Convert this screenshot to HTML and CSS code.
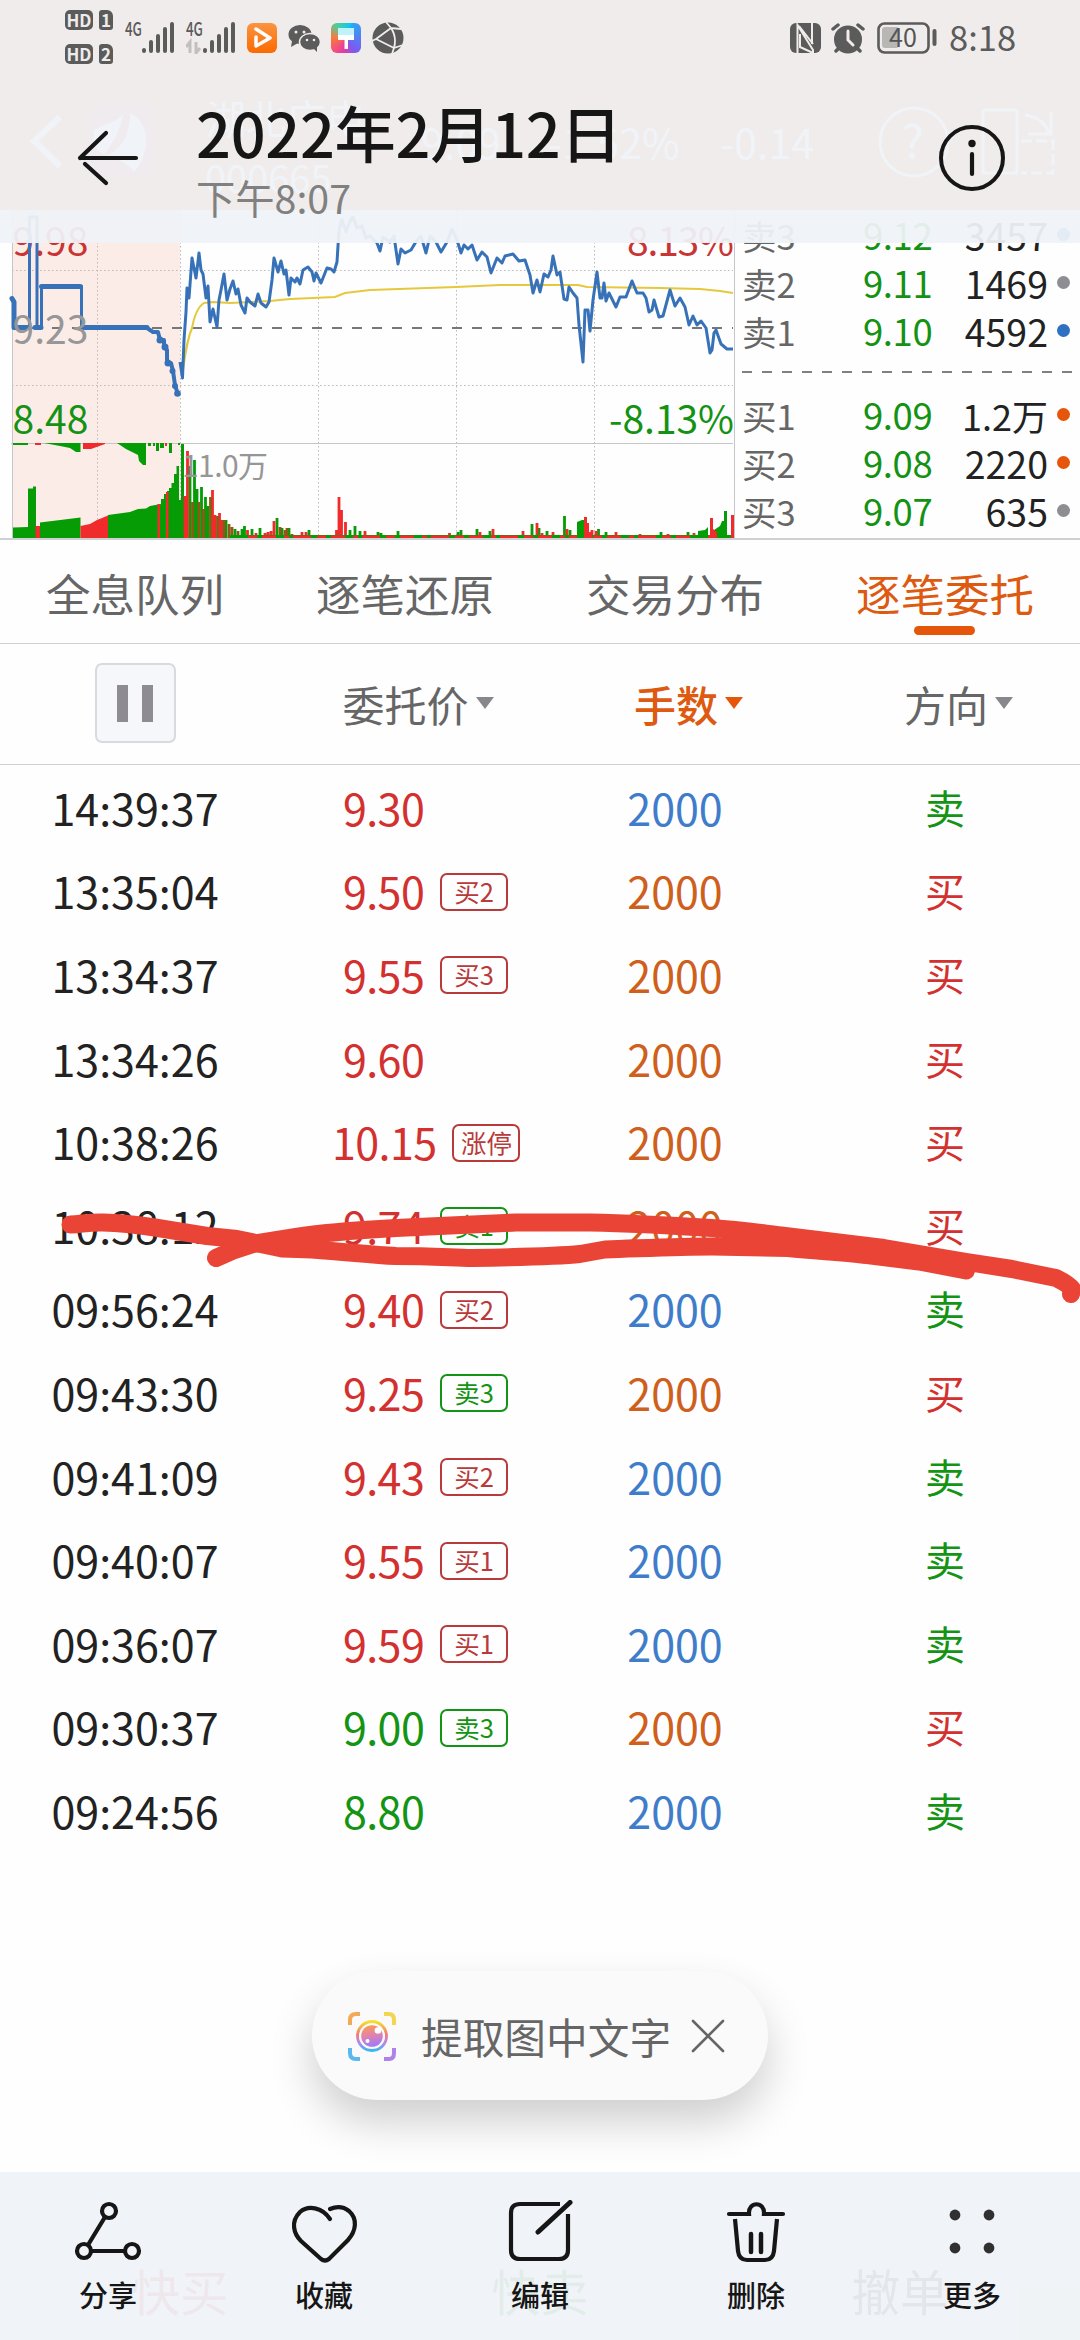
FILE: index.html
```html
<!DOCTYPE html>
<html lang="zh-CN">
<head>
<meta charset="utf-8">
<title>2022年2月12日</title>
<link rel="stylesheet" href="styles.css">
</head>
<body>
<div class="screen">
  <main class="photo">
    <svg class="stock-head" viewBox="0 0 1080 210" fill="none" stroke="#fff" stroke-width="4">
      <path d="M60 117L34 141L60 166" stroke-width="6"/>
      <rect x="88" y="106" width="66" height="70" rx="8" fill="#ff7060" stroke="none"/>
      <path d="M94 130C104 124 118 122 124 113C120 130 112 146 104 154C94 150 92 140 94 130ZM130 113C150 122 152 152 134 172C128 164 116 158 106 156C124 148 130 132 130 113Z" fill="#fff" stroke="none"/>
      <g fill="#fff" stroke="none">
        <text x="206" y="134" font-size="40">湖北广电</text>
        <text x="205" y="193" font-size="38">000665</text>
        <text x="421" y="159" font-size="41">9.09</text>
        <text x="548" y="159" font-size="41">-1.52%</text>
        <text x="720" y="159" font-size="41">-0.14</text>
        <text x="902" y="158" font-size="46">?</text>
      </g>
      <circle cx="914" cy="142" r="34" stroke-width="3"/>
      <rect x="983" y="110" width="34" height="63" rx="2" stroke-width="3"/>
      <path d="M1025 115Q1045 118 1049 134M1051 112V134H1028" stroke-width="3"/>
      <path d="M1021 141H1053V173H1021" stroke-width="3" stroke-dasharray="11 4"/>
    </svg>
    <section class="market">
      <svg class="chart" viewBox="0 210 735 328" fill="none">
        <rect x="12" y="210" width="168" height="329" fill="#fcece8"/>
        <g stroke="#b9b9b9" stroke-dasharray="1.5 2.5">
          <path d="M97.5 210V538M180.5 210V538M318.5 210V538M456.5 210V538M594.5 210V538M12 270.500H733M12 385.500H733"/>
        </g>
        <path d="M12.500 210V538M11 443.500H733M734.500 210V538" stroke="#c6c6c9"/>
        <path d="M12 328H733" stroke="#777" stroke-width="2" stroke-dasharray="10 10"/>
        <!-- order imbalance hanging under the price pane -->
        <path fill="#059c05" d="M13 443H28V445H13ZM44 443L60 446 70 448 76 452H80.500V443ZM117 443L126 449 134 453 138 455 139 461 143 465H146V443ZM148 443h3v3h-3zM153 443h2v3h-2zM156 443h3v8h-3zM160 443h4v5h-4zM169 443h3v10h-3zM178 443h2v2h-2z"/>
        <path fill="#f02b2b" d="M35 443h6v2h-6zM83 443V449H91L105 444V443ZM165 443h2v3h-2z"/>
        <!-- volume -->
        <path fill="#059c05" d="M13 539V527.500L28 527V488.500H33V486.500H36V539ZM40 539V522.500L80.500 517.500V539ZM108 539V515L130 512 138 509 146 508.500 150 506 161 504V499H164V494H167V491H169V488H171.500V483H174V474H176.500V466H179V500H181V444H184V539Z"/>
        <path fill="#f02b2b" d="M35.500 526H40V539H35.500ZM80.500 526L90 524 97 520 102 518 108 515.500V539H80.500ZM157.500 504h2.500V539h-2.500zM166 492h2.500V539h-2.500z"/>
        <path stroke="#059c05" stroke-width="2.800" d="M190 539V466M194.500 539V460M197 539V489M201.500 539V487M205.500 539V497M208 539V506M226 539V520M235 539V529M242 539V529M244.500 539V526M252 539V529M260 539V528M277 539V518M282 539V528M289 539V528M309 539V530M350 539V530M355 539V526M360 539V531M378 539V532M381 539V533M398 539V531M458 539V532M461 539V530M477 539V529M490 539V531M532 539V524M539 539V528M547 539V531M564.500 539V516M570 539V530M598.500 539V529M606 539V532M661 539V532M688 539V532"/>
        <path stroke="#f02b2b" stroke-width="2.800" d="M185 539V496M187.500 539V451M212.500 539V490M215 539V515M219.500 539V513M222 539V520M247.500 539V530M256 539V533M265 539V533M268 539V532M271 539V531M274 539V521M302 539V532M306 539V532M336.500 539V530M339 539V497M341.500 539V510M345.500 539V522M365 539V531M449.500 539V533M480 539V532M493 539V529M523 539V531M537 539V523M542 539V533M553 539V532M567 539V529M592 539V530M596 539V531M616 539V532M640 539V534M668 539V534M694 539V533"/>
        <path stroke="#8d5917" stroke-width="2.800" d="M192.500 539V502M199 539V502M203.500 539V509M210.500 539V497M217.500 539V516M224 539V520M229 539V524M232 539V527M238 539V531M280 539V527M285 539V530M287 539V528M292 539V534"/>
        <path d="M230 537H733" stroke="#059c05" stroke-width="4"/>
        <path d="M248 537.500H733" stroke="#f02b2b" stroke-width="4" stroke-dasharray="9 5 14 8 5 4 18 6"/>
        <path fill="#059c05" d="M577 539V522L582 520H584V539ZM698 539V531L705 530 708 527V539ZM714 539V530L720 526 722 521 724 521V511H727V539Z"/>
        <path fill="#f02b2b" d="M584 539V517H587V523H589V532H592V539ZM710 539V518H713V529L717 532V539ZM731 515H734V539H731Z"/>
        <g class="axis">
          <text x="12.500" y="256" fill="#c93434">9.98</text>
          <text x="12.500" y="433.500" fill="#149214">8.48</text>
          <text x="734" y="256" fill="#c93434" text-anchor="end" textLength="107">8.13%</text>
          <text x="734" y="433.500" fill="#149214" text-anchor="end" textLength="125">-8.13%</text>
          <text class="axis-small" x="182" y="477" fill="#969696" textLength="86">11.0万</text>
        </g>
        <path d="M183 370C186 350 187 340 192 328 195 312 199 306 204 303L213 302 230 303 270 301 290 299 335 297 345 293 370 290 456 287 500 285 578 285 587 287 660 288 700 289 720 291 733 293" stroke="#e6c83c" stroke-width="2"/>
        <g stroke="#3772b8" stroke-linejoin="round">
          <path stroke-width="3" d="M180 362L182.500 378 184 340 186 312 187 288 189 298 192 258 196 278 199 253 201 270 203 274 206 298 208 286 210 322 213 309 217 327 219 300 221 290 224 274 227 300 230 289 233 281 236 294 238 289 241 305 245 313 247 298 250 302 255 306 258 294 261 303 266 307 269 302 272 280 274 258 278 272 281 261 284 274 286 270 289 295 291 278 295 282 297 278 300 284 303 270 308 267 312 272 314 281 316 273 321 283 327 268 331 269 334 272 337 262 339 230 342 220 346 232 350 221 353 217 357 228 362 226 366 238 370 236 374 240 377 243 380 251 383 237 390 242 394 236 398 264 401 249 405 253 411 250 417 240 421 236 426 253 430 236 436 242 441 252 447 242 452 229 457 240 461 253 464 245 468 249 472 245 477 260 482 252 487 257 491 273 497 258 502 263 505 256 513 254 519 261 525 260 530 275 533 293 537 280 540 292 544 274 548 277 551 270 553 256 557 275 560 272 564 299 567 300 569 287 573 293 577 298 579 325 583 362 585 310 588 310 590 331 593 300 597 272 600 298 602 298 604 283 606 301 609 293 616 307 620 297 626 297 632 281 637 293 643 293 646 298 649 312 652 310 654 300 659 317 663 316 670 290 675 306 680 298 685 307 689 325 693 316 697 325 701 321 706 328 710 353 712 350 714 333 716 330 721 344 727 349 733 349"/>
          <path stroke-width="3" d="M29.500 327V217H37V327M41.500 327V286H81.500V327"/>
          <path stroke-width="5" stroke-linecap="round" d="M12 298.500L14 302V327.500H28M35 327.500H41M41.500 286.500H80M83 327.500H147"/>
          <path stroke-width="4" stroke-linecap="round" d="M147 328L153 332H158L160 340H164V347L167 350V363H171L173 371 175 385 177.500 393"/>
        </g>
        <g fill="#3772b8"><circle cx="160" cy="340" r="3.500"/><circle cx="165" cy="347" r="3.500"/><circle cx="168" cy="363" r="3.500"/><circle cx="172.500" cy="371" r="3"/><circle cx="175" cy="386" r="3"/><circle cx="177.500" cy="393.500" r="3.300"/></g>
        <text class="axis" x="12.500" y="344" fill="#979797">9.23</text>
      </svg>
      <div class="book">
        <div class="quote"><span>卖3</span><b>9.12</b><i>3457</i><em class="dot blue-dot"></em></div>
        <div class="quote"><span>卖2</span><b>9.11</b><i>1469</i><em class="dot"></em></div>
        <div class="quote"><span>卖1</span><b>9.10</b><i>4592</i><em class="dot blue-dot"></em></div>
        <div class="split"></div>
        <div class="quote"><span>买1</span><b>9.09</b><i class="wan">1.2万</i><em class="dot hot-dot"></em></div>
        <div class="quote"><span>买2</span><b>9.08</b><i>2220</i><em class="dot hot-dot"></em></div>
        <div class="quote"><span>买3</span><b>9.07</b><i>635</i><em class="dot"></em></div>
      </div>
    </section>
    <nav class="tabs">
      <div>全息队列</div><div>逐笔还原</div><div>交易分布</div><div class="active">逐笔委托</div>
    </nav>
    <div class="heads">
      <div class="pause"><span></span><span></span></div>
      <div class="head price-head">委托价<u></u></div>
      <div class="head hot">手数<u></u></div>
      <div class="head dir-head">方向<u></u></div>
    </div>
    <section class="orders">
      <div class="row"><time>14:39:37</time><div class="price red">9.30</div><div class="blue">2000</div><div class="side green">卖</div></div>
      <div class="row"><time>13:35:04</time><div class="price red">9.50<span class="tag">买2</span></div><div class="orange">2000</div><div class="side red">买</div></div>
      <div class="row"><time>13:34:37</time><div class="price red">9.55<span class="tag">买3</span></div><div class="orange">2000</div><div class="side red">买</div></div>
      <div class="row"><time>13:34:26</time><div class="price red">9.60</div><div class="orange">2000</div><div class="side red">买</div></div>
      <div class="row"><time>10:38:26</time><div class="price wide red">10.15<span class="tag">涨停</span></div><div class="orange">2000</div><div class="side red">买</div></div>
      <div class="row"><time>10:38:12</time><div class="price red">9.74<span class="tag green">卖1</span></div><div class="orange">2000</div><div class="side red">买</div></div>
      <div class="row"><time>09:56:24</time><div class="price red">9.40<span class="tag">买2</span></div><div class="blue">2000</div><div class="side green">卖</div></div>
      <div class="row"><time>09:43:30</time><div class="price red">9.25<span class="tag green">卖3</span></div><div class="orange">2000</div><div class="side red">买</div></div>
      <div class="row"><time>09:41:09</time><div class="price red">9.43<span class="tag">买2</span></div><div class="blue">2000</div><div class="side green">卖</div></div>
      <div class="row"><time>09:40:07</time><div class="price red">9.55<span class="tag">买1</span></div><div class="blue">2000</div><div class="side green">卖</div></div>
      <div class="row"><time>09:36:07</time><div class="price red">9.59<span class="tag">买1</span></div><div class="blue">2000</div><div class="side green">卖</div></div>
      <div class="row"><time>09:30:37</time><div class="price green">9.00<span class="tag">卖3</span></div><div class="orange">2000</div><div class="side red">买</div></div>
      <div class="row"><time>09:24:56</time><div class="price green">8.80</div><div class="blue">2000</div><div class="side green">卖</div></div>
    </section>
    <div class="trade"><span class="red">快买</span><span class="green">快卖</span><span>撤单</span></div>
  </main>

  <svg class="scribble" viewBox="0 1200 1080 110" fill="none" stroke="#e94436" stroke-width="18" stroke-linecap="round" stroke-linejoin="round">
    <path d="M70.500 1224.500C82 1224 90 1222 103 1222.500 120 1223 138 1225 155 1227.500L207 1236 237 1239 282 1248.500 312 1249.500C350 1252 370 1255 396 1256 430 1256 450 1257.500 472 1258 500 1257.500 560 1256 580 1254L605 1249.500C650 1248 680 1246.500 712 1246.500L788 1248C820 1251 845 1252.500 867 1255L919 1261.500 966 1270.500"/>
    <path d="M216 1258Q235 1249 255 1243.500L296 1237C320 1233 360 1230 396 1228L516 1222.500 590 1222.500C640 1223.500 680 1226 712 1228 740 1230 760 1233 781 1235.500L884 1248 967 1262 1012 1269 1056 1278C1064 1282 1070 1286 1072 1289L1071 1294"/>
  </svg>

  <div class="extract">
    <svg width="50" height="50" viewBox="0 0 50 50" fill="none">
      <defs>
        <linearGradient id="ring" x1="0" y1="0" x2="0" y2="1"><stop offset="0" stop-color="#f5e02c"/><stop offset=".45" stop-color="#f27878"/><stop offset=".75" stop-color="#b388ee"/><stop offset="1" stop-color="#39b7f0"/></linearGradient>
        <linearGradient id="lens" x1="0" y1="0" x2=".2" y2="1"><stop offset="0" stop-color="#f9a13c"/><stop offset=".5" stop-color="#e683a8"/><stop offset="1" stop-color="#a47bf5"/></linearGradient>
      </defs>
      <g stroke-width="4"><path d="M3 14V9Q3 3 9 3H13" stroke="#f4a957"/><path d="M37 3H42Q47 3 47 9V14" stroke="#f3d550"/><path d="M3 37V42Q3 48 9 48H13" stroke="#5bb7ee"/><path d="M37 48H42Q47 48 47 42V37" stroke="#ad83ea"/></g>
      <circle cx="25" cy="25" r="14.500" stroke="url(#ring)" stroke-width="2.800"/>
      <circle cx="25" cy="25" r="10.800" fill="url(#lens)"/>
      <circle cx="31" cy="19.500" r="3.300" fill="#fff"/><circle cx="20.500" cy="30" r="2" fill="#fff"/>
    </svg>
    <span>提取图中文字</span>
    <svg width="34" height="34" viewBox="0 0 34 34" stroke="#666" stroke-width="2.600" stroke-linecap="round"><path d="M2 2L32 32M32 2L2 32"/></svg>
  </div>

  <header class="overlay">
    <div class="status">
      <div class="sims">
        <div><span class="hd">HD</span><span class="sim">1</span></div>
        <div><span class="hd">HD</span><span class="sim">2</span></div>
      </div>
      <svg class="signal" width="52" height="34" viewBox="0 0 52 34"><text x="0" y="16" font-size="19" font-weight="500" textLength="17" lengthAdjust="spacingAndGlyphs" fill="#5b5b5b">4G</text><path d="M19 31V30M26 31V22M33 31V16M40 31V9M47 31V4" stroke="#5b5b5b" stroke-width="4" stroke-linecap="round"/></svg>
      <svg class="signal two" width="52" height="34" viewBox="0 0 52 34"><text x="0" y="16" font-size="19" font-weight="500" textLength="17" lengthAdjust="spacingAndGlyphs" fill="#5b5b5b">4G</text><path d="M4 33V22L0 27M10 22V33L14 28" stroke="#c2bfbf" stroke-width="3" fill="none"/><path d="M19 31V30M26 31V22M33 31V16M40 31V9M47 31V4" stroke="#5b5b5b" stroke-width="4" stroke-linecap="round"/></svg>
      <svg class="app" width="30" height="30" viewBox="0 0 30 30"><defs><linearGradient id="or" x1="0" y1="0" x2="0" y2="1"><stop stop-color="#fb9440"/><stop offset="1" stop-color="#fb6a00"/></linearGradient></defs><rect width="30" height="30" rx="6" fill="url(#or)"/><path d="M9 6L23 15 9 23V14" fill="none" stroke="#fff" stroke-width="3.500" stroke-linejoin="round" stroke-linecap="round"/></svg>
      <svg width="32" height="30" viewBox="0 0 32 30"><g fill="#5b5b5b"><ellipse cx="12" cy="11.500" rx="11.500" ry="9.500"/><path d="M4 18L3 24 10 20Z"/><ellipse cx="22" cy="19" rx="10.500" ry="8.500" stroke="#f0eceb" stroke-width="1.500"/><path d="M25 25L29 29 29 23Z"/></g><g fill="#f0eceb"><circle cx="8" cy="9" r="1.500"/><circle cx="16" cy="9" r="1.500"/><circle cx="19" cy="17" r="1.300"/><circle cx="26" cy="17" r="1.300"/></g></svg>
      <span class="theme"><svg width="30" height="30" viewBox="0 0 30 30"><path d="M7 5H23V13H7Z" fill="#bff2fb"/><path d="M7 12H23V17H17V26H13.500V17H7Z" fill="#fff"/></svg></span>
      <svg class="globe" width="32" height="32" viewBox="0 0 32 32"><circle cx="16" cy="16" r="15.500" fill="#5b5b5b"/><path d="M19 6L4 17M4 17L22 26M19 6Q25 15 22 26M19 6L14 0M19 6L29 7M4 17L0 19M22 26L31 23M22 26L20 32" fill="none" stroke="#f0eceb" stroke-width="1.800"/></svg>
      <div class="fill"></div>
      <svg width="31" height="30" viewBox="0 0 31 30"><rect width="31" height="30" rx="6" fill="#5b5b5b"/><path d="M7.500 30V2L23 27V30M9 3L23 21M22 0V21M10 11V24L23 30" fill="none" stroke="#f0eceb" stroke-width="2"/></svg>
      <svg class="alarm" width="34" height="31" viewBox="0 0 34 31"><circle cx="17" cy="16.500" r="14" fill="#5b5b5b"/><path d="M2 6L7 2M32 6L27 2M5 28L8 25M29 28L26 25" stroke="#5b5b5b" stroke-width="3.500" stroke-linecap="round"/><path d="M17 8V17L22 22" fill="none" stroke="#f0eceb" stroke-width="3" stroke-linecap="round"/></svg>
      <svg class="battery" width="61" height="32" viewBox="0 0 61 32"><rect x="1.500" y="1.500" width="50" height="29" rx="6" fill="none" stroke="#5b5b5b" stroke-width="2.600"/><rect x="5" y="5" width="17" height="21" rx="3" fill="#b9b7b6"/><path d="M57.500 9V22" stroke="#5b5b5b" stroke-width="4" stroke-linecap="round"/><text x="12" y="25" font-size="25" fill="#555">40</text></svg>
      <span class="clock">8:18</span>
    </div>
    <div class="title-bar">
      <svg class="back" width="62" height="58" viewBox="0 0 62 58" fill="none" stroke="#161616" stroke-width="4.200" stroke-linecap="round"><path d="M3 29H59M3 29L29 4M8 35L29 54"/></svg>
      <div class="titles"><h1>2022年2月12日</h1><p>下午8:07</p></div>
      <svg class="info" width="66" height="66" viewBox="0 0 66 66"><circle cx="33" cy="33" r="31" fill="none" stroke="#161616" stroke-width="4"/><circle cx="33" cy="18.500" r="3.700" fill="#161616"/><path d="M33 29V49" stroke="#161616" stroke-width="4.200" stroke-linecap="round"/></svg>
    </div>
  </header>

  <footer class="actions">
    <div><svg viewBox="0 0 68 66" fill="none" stroke="#161616" stroke-width="4.200"><circle cx="35" cy="11" r="7"/><circle cx="10" cy="51" r="7"/><circle cx="58" cy="51" r="7"/><path d="M31 17L14 45M17 51H51"/></svg>分享</div>
    <div><svg viewBox="0 0 68 66" fill="none" stroke="#161616" stroke-width="4.200" stroke-linecap="round"><path d="M40 19C32 7 18 5 10 12C0 22 4 34 11 41L31 59Q35 62 39 59L58 40C66 31 68 19 59 11C54 7 47 6 40 9"/></svg>收藏</div>
    <div><svg viewBox="0 0 68 66" fill="none" stroke="#161616" stroke-width="4.200" stroke-linecap="round"><path d="M54 4H14Q5 4 5 13V50Q5 59 14 59H53Q62 59 62 50V14" stroke-linecap="butt"/><path d="M32 32L64 2.500" stroke-width="5"/></svg>编辑</div>
    <div><svg viewBox="0 0 68 66" fill="none" stroke="#161616" stroke-width="4.200" stroke-linecap="round"><path d="M7 14H27C26 1 43 1 42 14H61"/><path d="M13 19L16 51Q17 60 25 60H43Q51 60 52 51L55 19" stroke-linecap="butt"/><path d="M29 34V52M39 34V52" stroke-width="4.500"/></svg>删除</div>
    <div><svg viewBox="0 0 68 66" fill="#303030"><circle cx="17" cy="15" r="5.400"/><circle cx="51" cy="15" r="5.400"/><circle cx="17" cy="48" r="5.400"/><circle cx="51" cy="48" r="5.400"/></svg>更多</div>
  </footer>
</div>
</body>
</html>
```

FILE: styles.css
```css
* { box-sizing: border-box; }
body { margin: 0; font-family: "Noto Sans CJK SC", sans-serif; color: #222; background: #fefefe; }
svg { display: block; flex: none; }
.screen { position: relative; width: 1080px; height: 2340px; overflow: hidden; background: #fefefe; }
.photo { display: flex; flex-direction: column; height: 2340px; }

.red { color: #d33030; }
.green { color: #149414; }
.blue { color: #3f7dca; }
.orange { color: #cf5f1c; }

/* stock page */
.stock-head { width: 1080px; height: 210px; background: #f08737; }
.market { display: flex; height: 330px; border-bottom: 2px solid #cfd0d3; }
.chart { width: 735px; height: 328px; }
.axis { font-size: 39px; }
.axis-small { font-size: 30px; }
.book { flex: 1; padding: 1px 8px 0 7px; }
.quote { display: grid; grid-template-columns: 121px 95px 90px 24px; align-items: center; height: 48px; font-size: 36.500px; line-height: 48px; white-space: nowrap; }
.quote span { font-size: 34.500px; color: #666; }
.quote b { font-weight: 400; color: #149214; letter-spacing: -.4px; }
.quote i { font-style: normal; justify-self: end; font-size: 37.500px; }
.quote .wan { font-size: 36px; }
.dot { width: 13px; height: 13px; margin-left: 6px; margin-top: -2px; border-radius: 50%; background: #8e8d92; justify-self: center; }
.blue-dot { background: #2e70c2; }
.hot-dot { background: #e5550a; }
.split { height: 36px; background: repeating-linear-gradient(90deg, #808080 0 10px, transparent 10px 20px) 0 16px / 100% 2px no-repeat; }

.tabs { display: grid; grid-template-columns: repeat(4, 1fr); height: 104px; border-bottom: 1px solid #cfd0d3; font-size: 44.500px; line-height: 105px; text-align: center; color: #666; }
.active { position: relative; color: #dd5a10; }
.active::after { content: ""; position: absolute; left: 104px; top: 86px; width: 61px; height: 9px; border-radius: 5px; background: #e5550a; }
.heads { display: grid; grid-template-columns: repeat(4, 270px); align-items: center; height: 121px; border-bottom: 1px solid #cfd0d3; color: #666; }
.head { display: flex; align-items: center; justify-content: center; gap: 7px; font-size: 42px; line-height: 60px; padding-bottom: 1px; }
.price-head { padding-left: 26px; }
.hot { color: #dd5a10; font-weight: 500; padding-left: 27px; }
.dir-head { padding-left: 27px; }
.head u { border: 9px solid transparent; border-top: 12px solid #88888c; border-bottom: 0; margin-top: -2px; }
.hot u { border-top-color: #e5550a; }
.pause { display: flex; gap: 14px; align-items: center; justify-content: center; justify-self: center; width: 81px; height: 80px; margin-top: -2px; border: 2px solid #d7dade; border-radius: 7px; background: #f5f7fb; }
.pause span { width: 11px; height: 37px; background: #8e8c92; }

.orders { padding-top: 0; }
.row { display: grid; grid-template-columns: repeat(4, 270px); align-items: center; height: 83.600px; font-size: 43px; line-height: 60px; text-align: center; }
.price { display: flex; align-items: center; padding-left: 73px; letter-spacing: -.6px; }
.wide { padding-left: 62px; }
.side { font-size: 40px; }
.tag { width: 68px; height: 38px; margin: 3px 0 0 16px; border: 2px solid currentColor; border-radius: 7px; font-size: 25.500px; line-height: 32px; letter-spacing: 0; text-align: center; }
.red > .tag:not(.green) { color: #b93a3a; }
.trade { display: grid; grid-template-columns: 360px 360px 360px; flex: 1; align-items: end; text-align: center; font-size: 48.500px; line-height: 60px; padding-bottom: 20px; }

.scribble { position: absolute; left: 0; top: 1200px; width: 1080px; height: 110px; }

/* viewer chrome */
.extract { position: absolute; left: 312px; top: 1971px; width: 456px; height: 129px; border-radius: 65px; display: flex; align-items: center; padding: 0 43px 0 35px; background: #fafafb; box-shadow: 0 22px 44px rgba(0,0,0,.19); font-size: 41.700px; line-height: 60px; color: #666; white-space: nowrap; }
.extract span { margin: 0 20px 0 24px; }

.overlay { position: absolute; left: 0; top: 0; width: 1080px; height: 243px; background: rgba(239,242,246,.94); }
.status { display: flex; align-items: center; height: 76px; padding: 0 66px 0 65px; }
.sims { display: flex; flex-direction: column; gap: 14px; width: 60px; margin-top: -2px; }
.sims div { display: flex; gap: 6px; }
.hd, .sim { height: 20px; border-radius: 5px; background: #5b5b5b; color: #f0eceb; font-size: 17px; line-height: 20px; font-weight: 700; text-align: center; }
.hd { width: 28px; }
.sim { width: 14px; border-radius: 3px 6px 3px 3px; }
.signal { margin-top: -2px; }
.two { margin-left: 9px; margin-right: 9px; }
.app { margin-right: 11px; }
.theme { width: 30px; height: 30px; margin: 0 11px; border-radius: 6px; background: conic-gradient(from 20deg, #2aa8f5, #7b5af0 35%, #e93ba0 48%, #fb7a3a 70%, #48cfa0 85%, #0ac8f2); }
.fill { flex: 1; }
.alarm { margin: 0 12px 0 10px; }
.clock { margin: -4px 0 0 11px; font-size: 34.500px; line-height: 40px; color: #5b5b5b; width: 65px; }
.title-bar { display: flex; height: 164px; padding-left: 77px; }
.back { margin-top: 53px; }
.titles { margin-left: 57px; width: 743px; }
h1 { margin: 10px 0 0; font-size: 61.300px; font-weight: 500; line-height: 92px; color: #161616; letter-spacing: -.3px; }
p { margin: -9px 0 0; font-size: 39.300px; line-height: 56px; color: #808080; }
.info { margin-top: 49px; }

.actions { position: absolute; left: 0; top: 2172px; width: 1080px; height: 168px; display: grid; grid-template-columns: repeat(5, 1fr); background: rgba(239,242,246,.94); font-size: 29px; line-height: 40px; font-weight: 500; color: #161616; }
.actions div { display: flex; flex-direction: column; align-items: center; padding-top: 28px; gap: 8px; }
.actions svg { width: 68px; height: 66px; }
```
